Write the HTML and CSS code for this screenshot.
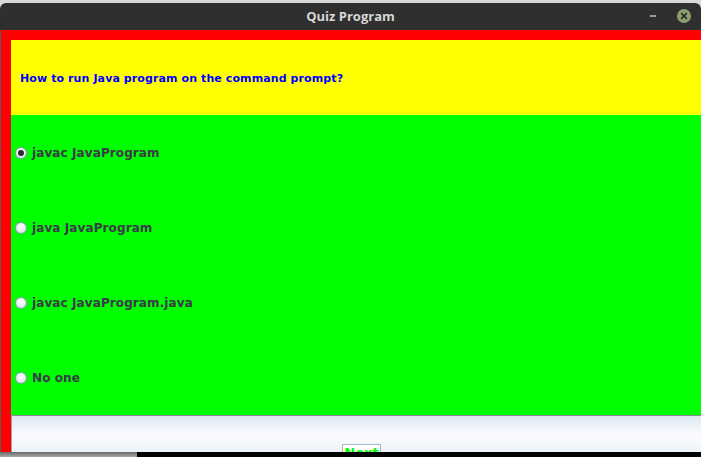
FILE: index.html
```html
<!DOCTYPE html>
<html>
<head>
<meta charset="utf-8">
<link rel="stylesheet" href="styles.css">
</head>
<body>
<div class="window">
  <div class="titlebar">
    <span class="title">Quiz Program</span>
    <div class="controls">
      <span class="min"></span>
      <span class="close">
        <svg width="14" height="14" viewBox="0 0 14 14"><circle cx="7" cy="7" r="7" fill="#8a9f6e"/><path d="M4.6 4.6 L9.4 9.4 M9.4 4.6 L4.6 9.4" stroke="#2b2b2b" stroke-width="1.6" stroke-linecap="round"/></svg>
      </span>
    </div>
  </div>
  <div class="frame">
    <div class="content">
      <div class="question">How to run Java program on the command prompt?</div>
      <div class="options">
        <label class="option"><span class="radio checked"></span><span class="opt-text">javac JavaProgram</span></label>
        <label class="option"><span class="radio"></span><span class="opt-text">java JavaProgram</span></label>
        <label class="option"><span class="radio"></span><span class="opt-text">javac JavaProgram.java</span></label>
        <label class="option"><span class="radio"></span><span class="opt-text">No one</span></label>
      </div>
      <div class="bottom">
        <span class="next">Next</span>
      </div>
    </div>
  </div>
  <div class="shadow"><span class="shadow-left"></span><span class="shadow-right"></span></div>
</div>
</body>
</html>
```
FILE: styles.css
```css
html, body {
  margin: 0;
  padding: 0;
  width: 701px;
  height: 457px;
  overflow: hidden;
  background: #d9d9d9;
}
.window {
  display: flex;
  flex-direction: column;
  width: 701px;
  height: 457px;
}
.titlebar {
  height: 27px;
  margin-top: 3px;
  background: #2f2f2f;
  border-radius: 6px 6px 0 0;
  display: flex;
  align-items: center;
  justify-content: center;
  position: relative;
  flex: none;
}
.title {
  font-family: "Open Sans", "DejaVu Sans", sans-serif;
  font-weight: 700;
  font-size: 13px;
  color: #d6d6d6;
  margin-top: -1px;
}
.controls {
  position: absolute;
  right: 10px;
  top: 6px;
  display: flex;
  align-items: center;
  gap: 21px;
}
.min {
  width: 6px;
  height: 2px;
  background: #9a9a9a;
  display: block;
}
.close {
  display: block;
  width: 14px;
  height: 14px;
}
.close svg { display: block; }
.frame {
  flex: none;
  height: 422px;
  background: #ff0000;
  border-left: 1px solid #5a5a5a;
  padding: 10px 0 0 10px;
  box-sizing: border-box;
  display: flex;
}
.content {
  flex: 1;
  display: flex;
  flex-direction: column;
}
.question {
  height: 75px;
  background: #ffff00;
  color: #0000ff;
  font-family: "DejaVu Sans", sans-serif;
  font-weight: 700;
  font-size: 11px;
  letter-spacing: 0.1px;
  display: flex;
  align-items: center;
  padding-left: 9px;
  padding-top: 1px;
  box-sizing: border-box;
}
.options {
  height: 300px;
  background: #00ff00;
  display: flex;
  flex-direction: column;
}
.option {
  height: 75px;
  display: flex;
  align-items: center;
  padding-left: 4px;
  gap: 5px;
}
.radio {
  width: 10px;
  height: 10px;
  border-radius: 50%;
  border: 1px solid #8a9ab0;
  background: radial-gradient(circle at 50% 35%, #ffffff 0%, #e8eef6 55%, #c8d4e4 100%);
  position: relative;
  flex: none;
}
.radio.checked::after {
  content: "";
  position: absolute;
  left: 2px;
  top: 2px;
  width: 6px;
  height: 6px;
  border-radius: 50%;
  background: #2a2a30;
}
.opt-text {
  font-family: "DejaVu Sans", sans-serif;
  font-weight: 700;
  font-size: 12px;
  letter-spacing: 0.1px;
  color: #3a3a48;
}
.bottom {
  height: 37px;
  border-top: 1px solid #8a8a98;
  border-left: 1px solid #9aa0b0;
  box-sizing: border-box;
  background: linear-gradient(#dde7f2 0%, #eef3f9 30%, #fbfcfe 55%, #eef3f8 100%);
  display: flex;
  justify-content: center;
  align-items: flex-start;
  overflow: hidden;
}
.next {
  margin-top: 28px;
  margin-left: 10px;
  border: 1px solid #a3b8cc;
  padding: 0 1px;
  font-family: "DejaVu Sans", sans-serif;
  font-weight: 700;
  font-size: 13px;
  color: #00ff00;
  background: #ffffff;
  line-height: 16px;
}
.shadow {
  flex: 1;
  display: flex;
}
.shadow-left {
  width: 137px;
  background: linear-gradient(#6a6a6a, #a8a8a8);
}
.shadow-right {
  flex: 1;
  background: #000000;
}
```
